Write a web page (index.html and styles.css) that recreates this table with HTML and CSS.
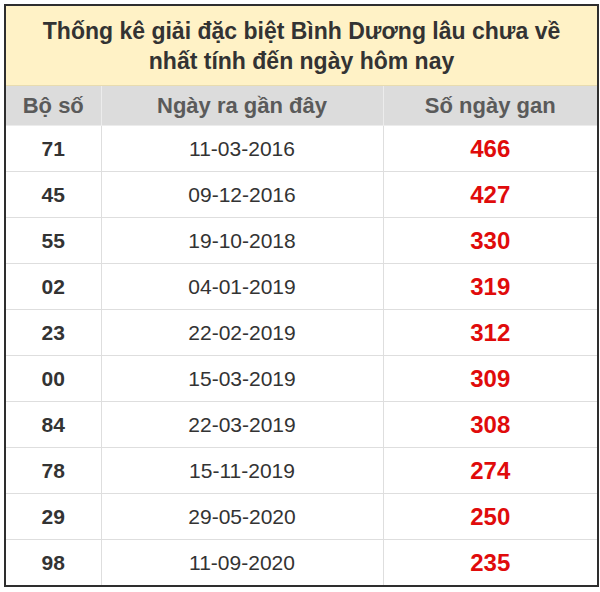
FILE: index.html
```html
<!DOCTYPE html>
<html lang="vi">
<head>
<meta charset="utf-8">
<link rel="stylesheet" href="styles.css">
</head>
<body>
<div class="wrap">
  <table class="stats">
    <colgroup><col class="c1"><col class="c2"><col class="c3"></colgroup>
    <thead>
      <tr><th colspan="3" class="title">Thống kê giải đặc biệt Bình Dương lâu chưa về<br>nhất tính đến ngày hôm nay</th></tr>
      <tr class="head"><th>Bộ số</th><th>Ngày ra gần đây</th><th>Số ngày gan</th></tr>
    </thead>
    <tbody>
      <tr><td class="num">71</td><td class="date">11-03-2016</td><td class="gan">466</td></tr>
      <tr><td class="num">45</td><td class="date">09-12-2016</td><td class="gan">427</td></tr>
      <tr><td class="num">55</td><td class="date">19-10-2018</td><td class="gan">330</td></tr>
      <tr><td class="num">02</td><td class="date">04-01-2019</td><td class="gan">319</td></tr>
      <tr><td class="num">23</td><td class="date">22-02-2019</td><td class="gan">312</td></tr>
      <tr><td class="num">00</td><td class="date">15-03-2019</td><td class="gan">309</td></tr>
      <tr><td class="num">84</td><td class="date">22-03-2019</td><td class="gan">308</td></tr>
      <tr><td class="num">78</td><td class="date">15-11-2019</td><td class="gan">274</td></tr>
      <tr><td class="num">29</td><td class="date">29-05-2020</td><td class="gan">250</td></tr>
      <tr><td class="num">98</td><td class="date">11-09-2020</td><td class="gan">235</td></tr>
    </tbody>
  </table>
</div>
</body>
</html>
```

FILE: styles.css
```css
html, body {
  margin: 0;
  padding: 0;
  background: #ffffff;
}
.wrap {
  padding: 4px 0 0 4px;
}
.stats {
  width: 593px;
  border-collapse: collapse;
  border: 2px solid #2e2e2e;
  font-family: "Liberation Sans", Arial, sans-serif;
  color: #333333;
  table-layout: fixed;
}
.c1 { width: 96px; }
.c2 { width: 282px; }
.c3 { width: 215px; }
.stats th, .stats td {
  padding: 0;
  text-align: center;
  border: 1px solid #dedede;
}
.stats .title {
  height: 79px;
  background: #fff2c6;
  font-size: 23px;
  font-weight: bold;
  line-height: 30px;
  color: #333333;
  border: 2px solid #2e2e2e;
  border-bottom: 1px solid #e8dcb0;
}
.head th {
  height: 39px;
  background: #dcdcdc;
  font-size: 22px;
  font-weight: bold;
  color: #5a5a5a;
  border-color: #ececec;
}
.stats td {
  height: 45px;
  font-size: 21px;
}
.num { font-weight: bold; color: #333333; }
.date { color: #333333; }
.gan {
  color: #e00b0b;
  font-weight: bold;
  font-size: 24px !important;
}
```
